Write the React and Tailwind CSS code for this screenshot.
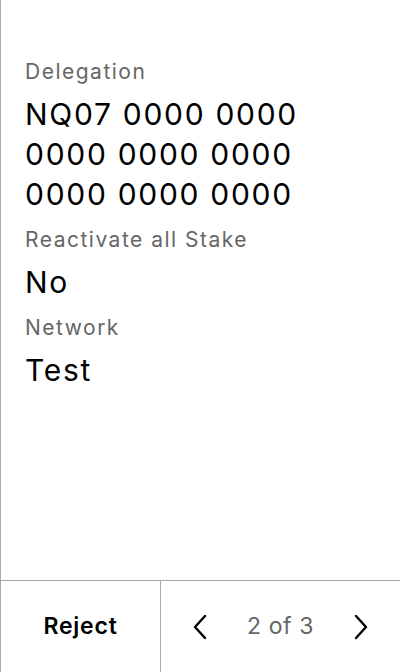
import React from 'react';

function Field({ label, children }) {
  return (
    <div className="mb-[14px]">
      <div className="text-[21px] leading-[24px] tracking-[1.5px] text-[#666666] mb-[10px]">{label}</div>
      <div className="text-[30px] leading-[40px] tracking-[1.7px] text-black">{children}</div>
    </div>
  );
}

export default function App() {
  return (
    <div
      className="w-[400px] h-[672px] bg-white flex flex-col border-l border-[#a8a8a8]"
      style={{ fontFamily: 'Inter, "Noto Sans", sans-serif' }}
    >
      <div className="flex-1 pl-6 pr-6 pt-[60px]">
        <Field label="Delegation">
          <div>NQ07 0000 0000</div>
          <div>0000 0000 0000</div>
          <div>0000 0000 0000</div>
        </Field>
        <Field label="Reactivate all Stake">No</Field>
        <Field label="Network">Test</Field>
      </div>
      <div className="h-[92px] border-t border-[#a8a8a8] flex">
        <div className="w-[159px] flex items-center justify-center text-[23px] tracking-[0.8px] font-semibold text-black">
          Reject
        </div>
        <div className="flex-1 border-l border-[#a8a8a8] flex items-center justify-between pl-[31px] pr-[31px]">
          <svg width="16" height="26" viewBox="0 0 16 26" fill="none" stroke="black" strokeWidth="2.4" strokeLinecap="round" strokeLinejoin="round">
            <path d="M13 2 L3 13 L13 24" />
          </svg>
          <span className="text-[23px] tracking-[0.6px] text-[#666666]">2 of 3</span>
          <svg width="16" height="26" viewBox="0 0 16 26" fill="none" stroke="black" strokeWidth="2.4" strokeLinecap="round" strokeLinejoin="round">
            <path d="M3 2 L13 13 L3 24" />
          </svg>
        </div>
      </div>
    </div>
  );
}
